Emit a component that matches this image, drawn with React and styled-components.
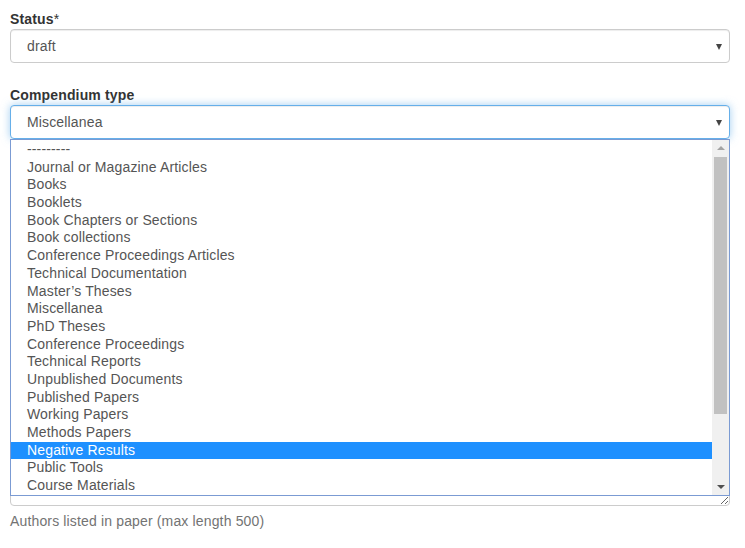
import React from 'react';
import styled, { createGlobalStyle } from 'styled-components';

const GlobalStyle = createGlobalStyle`
  html, body {
    margin: 0;
    padding: 0;
    background: #fff;
  }
  body {
    font-family: "Liberation Sans", Arial, Helvetica, sans-serif;
    font-size: 14px;
    line-height: 20px;
    letter-spacing: 0.15px;
    color: #333;
  }
`

const Form = styled.form`
  padding: 8px 15px 0 10px;
`

const FormGroup = styled.div`
  margin-bottom: ${props => props.gap ?? 21}px;
  padding-top: ${props => props.inset || 0}px;
`

const Label = styled.label`
  display: block;
  font-weight: bold;
  line-height: 20px;
  padding-top: 1px;
  margin-bottom: 0;
`

const Star = styled.span`
  font-weight: normal;
`

const SelectWrap = styled.div`
  position: relative;
`

const SelectBox = styled.div`
  box-sizing: border-box;
  height: 34px;
  padding: 0 16px;
  display: flex;
  align-items: center;
  justify-content: space-between;
  color: #555;
  background: #fff;
  border: 1px solid ${props => props.focused ? '#66afe9' : '#ccc'};
  border-radius: 4px;
  box-shadow: ${props => props.focused
    ? 'inset 0 1px 1px rgba(0,0,0,.075), 0 0 8px rgba(102,175,233,.6)'
    : 'inset 0 1px 1px rgba(0,0,0,.075)'};
`

const Caret = styled.span`
  width: 0;
  height: 0;
  margin-right: -9px;
  margin-top: 1px;
  border-left: 3.5px solid transparent;
  border-right: 3.5px solid transparent;
  border-top: 6px solid #444;
`

const Dropdown = styled.div`
  position: absolute;
  top: 34px;
  left: 0;
  right: 0;
  height: 357px;
  box-sizing: border-box;
  border: 1px solid #7b9bd3;
  background: #fff;
  display: flex;
  z-index: 2;
`

const OptionList = styled.ul`
  list-style: none;
  margin: 0;
  padding: 1px 0 0;
  flex: 1;
`

const Option = styled.li`
  height: 17.7px;
  line-height: 17.7px;
  padding-left: 16px;
  color: ${props => props.selected ? '#fff' : '#555'};
  background: ${props => props.selected ? '#1e90ff' : 'transparent'};
  white-space: nowrap;
`

const ScrollTrack = styled.div`
  width: 17px;
  background: #f0f0f0;
  display: flex;
  flex-direction: column;
  align-items: center;
`

const ArrowUp = styled.span`
  width: 0;
  height: 0;
  margin: 6px 0 7px;
  border-left: 4px solid transparent;
  border-right: 4px solid transparent;
  border-bottom: 4px solid #a3a3a3;
`

const ArrowDown = styled.span`
  width: 0;
  height: 0;
  margin: auto 0 6px;
  border-left: 4px solid transparent;
  border-right: 4px solid transparent;
  border-top: 4px solid #505050;
`

const Thumb = styled.div`
  width: 13px;
  height: 257px;
  background: #c1c1c1;
`

// the authors field sits under the open list, only its bottom edge shows
const TextArea = styled.textarea`
  display: block;
  box-sizing: border-box;
  width: 100%;
  height: 325px;
  padding: 6px 12px;
  border: 1px solid #ccc;
  border-radius: 4px;
  font: inherit;
  color: #555;
  resize: vertical;
  box-shadow: inset 0 1px 1px rgba(0,0,0,.075);
  outline: none;
`

const HelpBlock = styled.p`
  margin: 5px 0 0;
  color: #737373;
`

const types = [
  '---------',
  'Journal or Magazine Articles',
  'Books',
  'Booklets',
  'Book Chapters or Sections',
  'Book collections',
  'Conference Proceedings Articles',
  'Technical Documentation',
  'Master’s Theses',
  'Miscellanea',
  'PhD Theses',
  'Conference Proceedings',
  'Technical Reports',
  'Unpublished Documents',
  'Published Papers',
  'Working Papers',
  'Methods Papers',
  'Negative Results',
  'Public Tools',
  'Course Materials',
];

export default function App() {
  return (
    <>
      <GlobalStyle />
      <Form>
        <FormGroup>
          <Label>Status<Star>*</Star></Label>
          <SelectBox>
            <span>draft</span>
            <Caret />
          </SelectBox>
        </FormGroup>

        <FormGroup>
          <Label>Compendium type</Label>
          <SelectWrap>
            <SelectBox focused>
              <span>Miscellanea</span>
              <Caret />
            </SelectBox>
            <Dropdown>
              <OptionList>
                {types.map(t => (
                  <Option key={t} selected={t === 'Negative Results'}>{t}</Option>
                ))}
              </OptionList>
              <ScrollTrack>
                <ArrowUp />
                <Thumb />
                <ArrowDown />
              </ScrollTrack>
            </Dropdown>
          </SelectWrap>
        </FormGroup>

        <FormGroup gap={0} inset={21}>
          <TextArea readOnly defaultValue="" />
          <HelpBlock>Authors listed in paper (max length 500)</HelpBlock>
        </FormGroup>
      </Form>
    </>
  );
}
